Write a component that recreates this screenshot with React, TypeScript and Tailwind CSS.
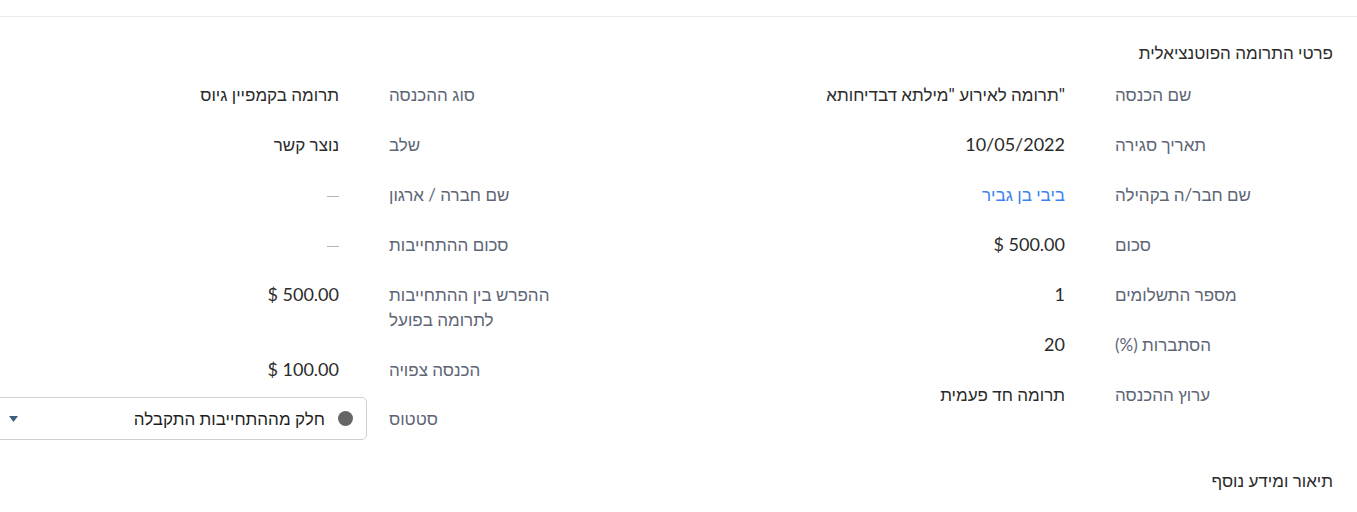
import React from 'react';

type Row = { label: React.ReactNode; value: React.ReactNode };

const Num = ({ children }: { children: React.ReactNode }) => (
  <span dir="ltr" className="text-[18px]">{children}</span>
);

const Dash = () => <span className="inline-block w-[12px] h-px bg-[#b5b5b5] align-middle" />;

const rightRows: Row[] = [
  { label: 'שם הכנסה', value: <span dir="ltr">תרומה לאירוע "מילתא דבדיחותא"</span> },
  { label: 'תאריך סגירה', value: <Num>10/05/2022</Num> },
  { label: 'שם חבר/ה בקהילה', value: <span className="text-[#3b82f0]">ביבי בן גביר</span> },
  { label: 'סכום', value: <Num>$ 500.00</Num> },
  { label: 'מספר התשלומים', value: <Num>1</Num> },
  { label: 'הסתברות (%)', value: <Num>20</Num> },
  { label: 'ערוץ ההכנסה', value: 'תרומה חד פעמית' },
];

const leftRows: Row[] = [
  { label: 'סוג ההכנסה', value: 'תרומה בקמפיין גיוס' },
  { label: 'שלב', value: 'נוצר קשר' },
  { label: 'שם חברה / ארגון', value: <Dash /> },
  { label: 'סכום ההתחייבות', value: <Dash /> },
  { label: 'ההפרש בין ההתחייבות לתרומה בפועל', value: <Num>$ 500.00</Num> },
  { label: 'הכנסה צפויה', value: <Num>$ 100.00</Num> },
];

const Field = ({ row }: { row: Row }) => (
  <div className="flex pb-[25px]">
    <div className="w-[218px] shrink-0 text-left text-[#5e6676]">{row.label}</div>
    <div className="flex-1 mr-[50px] text-right">{row.value}</div>
  </div>
);

export default function App() {
  return (
    <div
      dir="rtl"
      className="w-[1357px] h-[512px] overflow-hidden bg-white text-[17px] leading-[25px] text-[#2b2b2b]"
      style={{ fontFamily: 'Lato, "Liberation Sans", sans-serif' }}
    >
      <div className="h-[17px] border-b border-[#ebebeb]" />

      <div className="pr-[24px] pt-[23px] pb-[17px]">
        <h2 className="text-[17px] leading-[25px] text-[#2b2b2b]">פרטי התרומה הפוטנציאלית</h2>
      </div>

      <div className="flex pr-[24px]">
        {/* right column */}
        <div className="w-[726px] shrink-0">
          {rightRows.map((r, i) => (
            <Field key={i} row={r} />
          ))}
        </div>

        {/* left column */}
        <div className="w-[726px] shrink-0">
          {leftRows.map((r, i) => (
            <Field key={i} row={r} />
          ))}
          <div className="flex items-center -mt-[10px]">
            <div className="w-[218px] shrink-0 text-left text-[#5e6676]">סטטוס</div>
            <div className="w-[22px] shrink-0" />
            <div className="flex-1 h-[43px] border border-[#cfcfcf] rounded-[5px] flex items-center pr-[13px] pl-[127px]">
              <span className="w-[15px] h-[15px] rounded-full bg-[#666] shrink-0" />
              <span className="mr-[13px] text-[#1f1f1f]">חלק מההתחייבות התקבלה</span>
              <svg className="mr-auto" width="9" height="6" viewBox="0 0 9 6">
                <path d="M0 0 H9 L4.5 6 Z" fill="#3e5f80" />
              </svg>
            </div>
          </div>
        </div>
      </div>

      <div className="pr-[24px] pt-[28px]">
        <h2 className="text-[17px] leading-[25px] text-[#2b2b2b]">תיאור ומידע נוסף</h2>
      </div>
    </div>
  );
}
